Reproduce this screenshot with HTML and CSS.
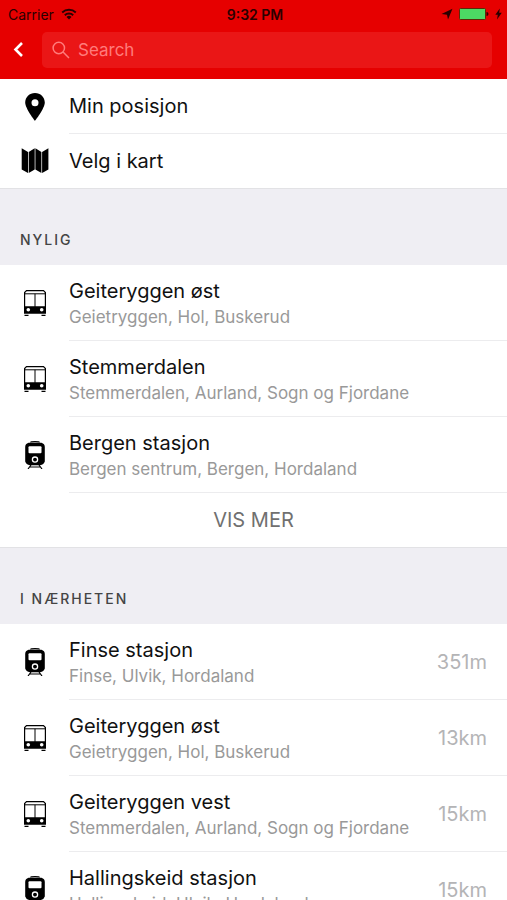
FILE: index.html
```html
<!DOCTYPE html>
<html lang="no">
<head>
  <meta charset="UTF-8">
  <meta name="viewport" content="width=device-width, initial-scale=1.0">
  <title>Velg sted</title>
  <link rel="stylesheet" href="styles.css">
</head>
<body>
  <!-- shared icons -->
  <svg class="sprite" aria-hidden="true">
    <symbol id="bus" viewBox="0 0 28 28">
      <path d="M5.500 1.600h17l1.900 1.900V24H3.600V3.500z" fill="#fff" stroke="#000" stroke-width="1.200"/>
      <path d="M3.500 4.800h21M14 4.800V18" fill="none" stroke="#000"/>
      <path d="M3 17.300h22v7.200H3zM3.500 25.700h4v1.200h-4zM20.500 25.700h4v1.200h-4z"/>
      <circle cx="7.300" cy="20.700" r="1.800" fill="#fff"/>
      <circle cx="20.700" cy="20.700" r="1.800" fill="#fff"/>
    </symbol>
    <symbol id="train" viewBox="0 0 28 28">
      <path d="M9.500 1.500Q9.500.6 14 .6t4.500.9" fill="none" stroke="#000" stroke-width="1.100"/>
      <path d="M7.500 1.800h13q3.300 1 3.300 4.200v14.500q-.8 3-4.800 3.700H9q-4-.7-4.800-3.700V6q0-3.200 3.300-4.200z"/>
      <rect x="7.500" y="5.200" width="13" height="7" rx="1" fill="#fff"/>
      <circle cx="14" cy="18.600" r="2.600" fill="#000" stroke="#fff" stroke-width="1.300"/>
      <path d="M10 24l-3 4M18 24l3 4M8.500 26h11" fill="none" stroke="#000" stroke-width="1.200"/>
    </symbol>
  </svg>

  <header class="top">
    <div class="status">
      <div class="carrier">
        <span>Carrier</span>
        <svg width="16" height="12" viewBox="0 0 16 12">
          <path d="M1.200 4.500a9.800 9.800 0 0 1 13.600 0M3.800 7.200a6 6 0 0 1 8.400 0" fill="none" stroke="#2a0000" stroke-width="1.900"/>
          <path d="M5.500 8.900a3.600 3.600 0 0 1 5 0L8 11.500z" fill="#2a0000"/>
        </svg>
      </div>
      <div class="time">9:32 PM</div>
      <div class="power">
        <svg width="12" height="12" viewBox="0 0 12 12"><path d="M11.500.8L7 11.500 6 6.700.5 6z" fill="#2a0000"/></svg>
        <svg width="30" height="12" viewBox="0 0 30 12">
          <rect x=".5" y=".5" width="26" height="11" rx="1" fill="#4cd964" stroke="#5c2a08"/>
          <path d="M27.500 4q2 0 2 2t-2 2z" fill="#2a0000"/>
        </svg>
        <svg width="7" height="12" viewBox="0 0 7 12"><path d="M4.800.5L.3 6.700h2.500L2 11.500l4.800-6.700H4.200z" fill="#2a0000"/></svg>
      </div>
    </div>
    <div class="search-bar">
      <button class="back" aria-label="Tilbake">
        <svg width="12" height="16" viewBox="0 0 12 16"><path d="M10 1L3.500 7.500 10 14" fill="none" stroke="#fff" stroke-width="2.600"/></svg>
      </button>
      <label class="search">
        <svg width="18" height="18" viewBox="0 0 18 18"><path d="M11.300 11.300L17 17M12.500 7a5.700 5.700 0 1 1-11.400 0 5.700 5.700 0 0 1 11.400 0z" fill="none" stroke="#ff7b7b" stroke-width="1.500"/></svg>
        <input type="text" placeholder="Search" aria-label="Search">
      </label>
    </div>
  </header>

  <main>
    <ul class="list">
      <li class="row short">
        <svg class="icon" viewBox="0 0 28 28"><path fill-rule="evenodd" d="M14 0c-5.500 0-9.800 4.200-9.800 9.600C4.200 15.500 14 28 14 28s9.800-12.500 9.800-18.400C23.800 4.200 19.500 0 14 0zm0 6.200a3.500 3.500 0 1 1 0 7 3.500 3.500 0 0 1 0-7z"/></svg>
        <a class="cell" href="#"><span class="name">Min posisjon</span></a>
      </li>
      <li class="row short">
        <svg class="icon" viewBox="0 0 28 28">
          <path d="M.7 1.300L7 5v21L.7 22.500zM7.700 5l6-3.700v21.200L7.700 26zM14.400 1.300l6 3.700v21l-6-3.500zM21.100 5l6.300-3.700v21.200L21.100 26z"/>
        </svg>
        <a class="cell" href="#"><span class="name">Velg i kart</span></a>
      </li>
    </ul>

    <h2>NYLIG</h2>
    <ul class="list">
      <li class="row">
        <svg class="icon"><use href="#bus"/></svg>
        <a class="cell" href="#"><span class="name">Geiteryggen øst</span><span class="area">Geietryggen, Hol, Buskerud</span></a>
      </li>
      <li class="row">
        <svg class="icon"><use href="#bus"/></svg>
        <a class="cell" href="#"><span class="name">Stemmerdalen</span><span class="area">Stemmerdalen, Aurland, Sogn og Fjordane</span></a>
      </li>
      <li class="row">
        <svg class="icon"><use href="#train"/></svg>
        <a class="cell" href="#"><span class="name">Bergen stasjon</span><span class="area">Bergen sentrum, Bergen, Hordaland</span></a>
      </li>
    </ul>
    <button class="more">VIS MER</button>

    <h2>I NÆRHETEN</h2>
    <ul class="list">
      <li class="row">
        <svg class="icon"><use href="#train"/></svg>
        <a class="cell" href="#"><span class="name">Finse stasjon</span><span class="area">Finse, Ulvik, Hordaland</span><span class="distance">351m</span></a>
      </li>
      <li class="row">
        <svg class="icon"><use href="#bus"/></svg>
        <a class="cell" href="#"><span class="name">Geiteryggen øst</span><span class="area">Geietryggen, Hol, Buskerud</span><span class="distance">13km</span></a>
      </li>
      <li class="row">
        <svg class="icon"><use href="#bus"/></svg>
        <a class="cell" href="#"><span class="name">Geiteryggen vest</span><span class="area">Stemmerdalen, Aurland, Sogn og Fjordane</span><span class="distance">15km</span></a>
      </li>
      <li class="row">
        <svg class="icon"><use href="#train"/></svg>
        <a class="cell" href="#"><span class="name">Hallingskeid stasjon</span><span class="area">Hallingskeid, Ulvik, Hordaland</span><span class="distance">15km</span></a>
      </li>
    </ul>
  </main>
</body>
</html>
```
FILE: styles.css
```css
* {
  box-sizing: border-box;
}

html,
body {
  height: 100%;
}

body {
  margin: 0;
  display: flex;
  flex-direction: column;
  font-family: Inter, "Liberation Sans", sans-serif;
  color: #111;
  background-color: #fff;
}

button,
input {
  font-family: inherit;
  border: 0;
  padding: 0;
  background: none;
}

svg {
  display: block;
  flex: none;
}

.sprite {
  position: absolute;
  width: 0;
  height: 0;
}

/* header */
.top {
  flex: none;
  background-color: #e60000;
  padding-bottom: 11px;
}

.status {
  display: grid;
  grid-template-columns: 1fr auto 1fr;
  align-items: center;
  height: 28px;
  padding: 0 5px 0 8px;
  font-size: 14px;
  color: #2a0000;
}

.carrier,
.power {
  display: flex;
  align-items: center;
  gap: 7px;
}

.power {
  justify-content: flex-end;
  gap: 6px;
}

.time {
  font-weight: 600;
}

.search-bar {
  display: flex;
  align-items: center;
  padding: 4px 15px 0 12px;
}

.back {
  width: 30px;
}

.search {
  flex: 1;
  display: flex;
  align-items: center;
  gap: 8px;
  height: 36px;
  padding: 0 10px;
  border-radius: 5px;
  background-color: #ea1616;
}

.search input {
  flex: 1;
  min-width: 0;
  font-size: 17px;
  color: #fff;
  outline: none;
}

.search input::placeholder {
  color: #ff7b7b;
  opacity: 1;
}

/* scrolling content */
main {
  flex: 1;
  overflow-y: auto;
  scrollbar-width: none;
}

h2 {
  display: flex;
  align-items: flex-end;
  height: 77px;
  margin: 0;
  padding: 0 20px 16px;
  font-size: 14px;
  line-height: 18px;
  font-weight: 500;
  letter-spacing: 2px;
  color: #444;
  background-color: #efeef3;
  border-top: 1px solid #e2e2e5;
}

.list {
  margin: 0;
  padding: 0;
  list-style: none;
}

.row {
  display: flex;
  align-items: center;
  height: 76px;
  padding-left: 21px;
}

.row.short {
  height: 55px;
}

.row.short:last-child {
  height: 54px;
}

.icon {
  width: 28px;
  height: 28px;
  margin-right: 20px;
}

.cell {
  flex: 1;
  display: grid;
  grid-template-columns: 1fr auto;
  align-content: center;
  align-items: center;
  height: 100%;
  padding-right: 20px;
  border-bottom: 1px solid #ececee;
  color: inherit;
  text-decoration: none;
}

.short:last-child .cell {
  border-bottom: 0;
}

.name,
.area {
  grid-column: 1;
}

.name {
  font-size: 20px;
  line-height: 28px;
}

.area {
  font-size: 17px;
  line-height: 24px;
  color: #999;
}

.distance {
  grid-column: 2;
  grid-row: 1 / 3;
  font-size: 20px;
  color: #b4b4b6;
}

.more {
  display: block;
  width: 100%;
  height: 54px;
  font-size: 20px;
  color: #707070;
}
```
